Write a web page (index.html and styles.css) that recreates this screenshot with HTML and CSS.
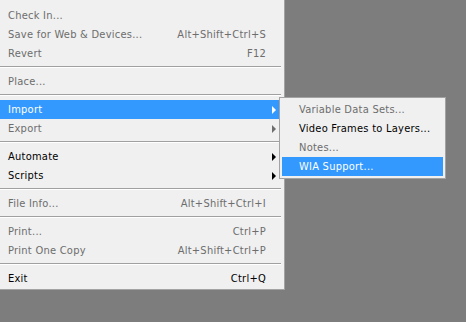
FILE: index.html
```html
<!DOCTYPE html>
<html>
<head>
<meta charset="utf-8">
<link rel="stylesheet" href="styles.css">
</head>
<body>
<div class="menu">
  <div class="item dis"><span class="label">Check In...</span></div>
  <div class="item dis"><span class="label">Save for Web &amp; Devices...</span><span class="key">Alt+Shift+Ctrl+S</span></div>
  <div class="item dis"><span class="label">Revert</span><span class="key">F12</span></div>
  <div class="sep"></div>
  <div class="item dis"><span class="label">Place...</span></div>
  <div class="sep"></div>
  <div class="item hl has-sub"><span class="label">Import</span><span class="arrow"></span>
    <div class="submenu">
      <div class="sitem dis">Variable Data Sets...</div>
      <div class="sitem">Video Frames to Layers...</div>
      <div class="sitem dis">Notes...</div>
      <div class="sitem hl">WIA Support...</div>
    </div>
  </div>
  <div class="item dis"><span class="label">Export</span><span class="arrow"></span></div>
  <div class="sep"></div>
  <div class="item"><span class="label">Automate</span><span class="arrow"></span></div>
  <div class="item"><span class="label">Scripts</span><span class="arrow"></span></div>
  <div class="sep"></div>
  <div class="item dis"><span class="label">File Info...</span><span class="key">Alt+Shift+Ctrl+I</span></div>
  <div class="sep"></div>
  <div class="item dis"><span class="label">Print...</span><span class="key">Ctrl+P</span></div>
  <div class="item dis"><span class="label">Print One Copy</span><span class="key">Alt+Shift+Ctrl+P</span></div>
  <div class="sep"></div>
  <div class="item"><span class="label">Exit</span><span class="key">Ctrl+Q</span></div>
</div>
</body>
</html>
```
FILE: styles.css
```css
html, body {
  margin: 0;
  padding: 0;
  background: #7d7d7d;
  height: 100%;
}
body {
  font-family: "DejaVu Sans Condensed", "DejaVu Sans", sans-serif;
  font-size: 11px;
  letter-spacing: 0.25px;
  color: #000;
  display: flex;
  align-items: flex-start;
}
.menu {
  width: 284px;
  background: #f0f0f0;
  border-right: 1px solid #a3a3a3;
  border-bottom: 1px solid #a3a3a3;
  padding: 6px 0 1px 0;
}
.item {
  position: relative;
  display: flex;
  align-items: center;
  height: 19px;
  width: 280px;
  padding-left: 8px;
  box-sizing: border-box;
}
.label {
  flex: 1;
  white-space: nowrap;
}
.key {
  padding-right: 14px;
  white-space: nowrap;
}
.arrow {
  width: 14px;
  height: 19px;
  display: flex;
  align-items: center;
  justify-content: center;
}
.arrow::before {
  content: "";
  border-left: 4px solid #000;
  border-top: 4px solid transparent;
  border-bottom: 4px solid transparent;
  margin-left: 1px;
}
.dis { color: #6d6d6d; }
.dis .arrow::before { border-left-color: #6d6d6d; }
.hl { background: #3399ff; color: #fff; }
.hl .arrow::before { border-left-color: #fff; }
.sep {
  width: 281px;
  height: 9px;
  box-sizing: border-box;
  padding-top: 3px;
}
.sep::before {
  content: "";
  display: block;
  height: 1px;
  background: #a0a0a0;
  border-bottom: 1px solid #ffffff;
}
.submenu {
  position: absolute;
  left: 279px;
  top: -3px;
  width: 161px;
  padding: 2px;
  background: #f0f0f0;
  border: 1px solid #a3a3a3;
  color: #000;
  z-index: 2;
}
.sitem {
  height: 19px;
  line-height: 19px;
  padding-left: 17px;
  white-space: nowrap;
}
.sitem.dis { color: #6d6d6d; }
.sitem.hl { color: #fff; }
```
